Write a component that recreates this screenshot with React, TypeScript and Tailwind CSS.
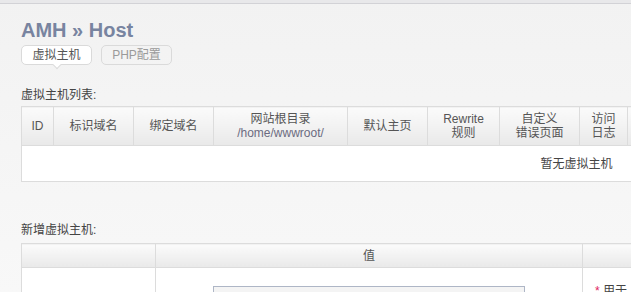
const FONT = { fontFamily: '"Liberation Sans", "Noto Sans CJK SC", sans-serif' };

const LIST_COLS = [
  { w: 32, label: ['ID'] },
  { w: 80, label: ['标识域名'] },
  { w: 80, label: ['绑定域名'] },
  { w: 134, label: ['网站根目录', '/home/wwwroot/'] },
  { w: 80, label: ['默认主页'] },
  { w: 72, label: ['Rewrite', '规则'] },
  { w: 80, label: ['自定义', '错误页面'] },
  { w: 48, label: ['访问', '日志'] },
  { w: 504, label: [] as string[] },
];

const thCls =
  'border border-[#dcdcdc] bg-gradient-to-b from-[#fbfbfb] to-[#e9e9e9] font-normal text-[12px] leading-[14px] text-[#555] text-center align-middle px-1';

function VhostList() {
  return (
    <table className="table-fixed border-collapse w-[1110px] bg-white">
      <colgroup>
        {LIST_COLS.map((c, i) => (
          <col key={i} style={{ width: c.w }} />
        ))}
      </colgroup>
      <thead>
        <tr className="h-[39px]">
          {LIST_COLS.map((c, i) => (
            <th key={i} className={thCls}>
              {c.label.map((l, j) => (
                <div key={j} className={l.startsWith('/') ? 'text-[#6b6b80]' : ''}>
                  {l}
                </div>
              ))}
            </th>
          ))}
        </tr>
      </thead>
      <tbody>
        <tr className="h-[36px]">
          <td colSpan={LIST_COLS.length} className="border border-[#dcdcdc] text-center text-[12px] text-[#444]">
            暂无虚拟主机
          </td>
        </tr>
      </tbody>
    </table>
  );
}

function AddVhost() {
  return (
    <table className="table-fixed border-collapse w-[1110px] bg-white">
      <colgroup>
        <col style={{ width: 134 }} />
        <col style={{ width: 427 }} />
        <col />
      </colgroup>
      <thead>
        <tr className="h-[24px]">
          <th className={thCls}></th>
          <th className={thCls}>值</th>
          <th className={thCls}></th>
        </tr>
      </thead>
      <tbody>
        <tr className="h-[90px]">
          <td className="border border-[#dcdcdc] text-[12px] text-[#444] text-center">主标识域名:</td>
          <td className="border border-[#dcdcdc] align-top pt-[18px]">
            <div className="mx-auto w-[312px] h-[26px] border border-[#aeb6c6] bg-[#f4f4f4]" />
          </td>
          <td className="border border-[#dcdcdc] align-top pt-[14px] pl-[12px] text-[12px] text-[#444]">
            <span className="text-[#e0245e]">*</span> 用于
          </td>
        </tr>
      </tbody>
    </table>
  );
}

export default function App() {
  return (
    <div style={FONT} className="w-[631px] h-[292px] overflow-hidden bg-gradient-to-b from-[#f2f2f2] to-[#f8f8f8]">
      <div className="h-[4px] bg-[#e8e8ea] border-b border-[#d2d2d6]" />
      <div className="px-[21px]">
        <h1 className="mt-[14px] text-[20px] leading-[24px] font-bold text-[#7884a0]">AMH » Host</h1>
        <div className="mt-[3px] flex gap-[9px]">
          <div className="relative w-[71px] h-[20px] rounded-[5px] border border-[#dadada] bg-white flex items-center justify-center text-[12px] text-[#555]">
            虚拟主机
            <span className="absolute left-1/2 -bottom-[4px] -ml-[3px] w-[6px] h-[6px] rotate-45 bg-white border-r border-b border-[#dadada]" />
          </div>
          <div className="w-[71px] h-[20px] rounded-[5px] border border-[#dadada] flex items-center justify-center text-[12px] text-[#9a9a9a]">
            PHP配置
          </div>
        </div>
        <div className="mt-[23px] text-[12px] leading-[15px] text-[#444]">虚拟主机列表:</div>
        <div className="mt-[3px]">
          <VhostList />
        </div>
        <div className="mt-[41px] text-[12px] leading-[15px] text-[#444]">新增虚拟主机:</div>
        <div className="mt-[5px]">
          <AddVhost />
        </div>
      </div>
    </div>
  );
}
